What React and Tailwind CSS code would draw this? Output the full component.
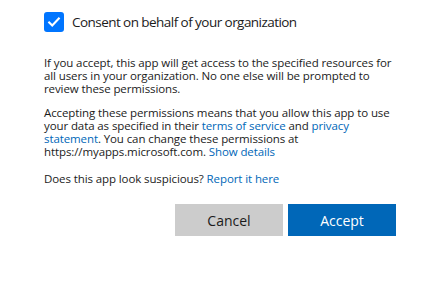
export default function App() {
  return (
    <div className="w-[440px] h-[281px] bg-white text-[#1b1b1b]" style={{ fontFamily: '"Open Sans", "Noto Sans", sans-serif' }}>
      <div className="pl-[44px] pr-[44px] pt-[12px]">
        {/* Consent checkbox */}
        <label className="flex items-center gap-[8px]">
          <span className="w-[20px] h-[20px] rounded-[3px] bg-[#0075ff] flex items-center justify-center shrink-0">
            <svg className="w-[14px] h-[14px]" viewBox="0 0 16 16" fill="none">
              <path d="M2.5 8.5l3.5 3.5 7.5-8" stroke="white" strokeWidth={2.4} strokeLinecap="square" />
            </svg>
          </span>
          <span className="text-[13.5px] leading-[20px] tracking-[-0.55px]">Consent on behalf of your organization</span>
        </label>

        <p className="mt-[24px] text-[11.5px] leading-[13px] tracking-[-0.1px]">
          If you accept, this app will get access to the specified resources for all users in your organization. No one else will be prompted to review these permissions.
        </p>

        <p className="mt-[11px] text-[11.5px] leading-[13px] tracking-[-0.1px]">
          Accepting these permissions means that you allow this app to use your data as specified in their{' '}
          <a href="#" className="text-[#0067b8]">terms of service</a> and{' '}
          <a href="#" className="text-[#0067b8]">privacy statement</a>. You can change these permissions at https://myapps.microsoft.com.{' '}
          <a href="#" className="text-[#0067b8]">Show details</a>
        </p>

        <p className="mt-[14px] text-[11.5px] leading-[13px] tracking-[-0.1px]">
          Does this app look suspicious? <a href="#" className="text-[#0067b8]">Report it here</a>
        </p>

        <div className="mt-[19px] flex justify-end gap-[5px]">
          <button className="w-[108px] h-[32px] bg-[#cccccc] text-[14px] text-[#1b1b1b]">Cancel</button>
          <button className="w-[108px] h-[32px] bg-[#0067b8] text-[14px] text-white">Accept</button>
        </div>
      </div>
    </div>
  );
}
